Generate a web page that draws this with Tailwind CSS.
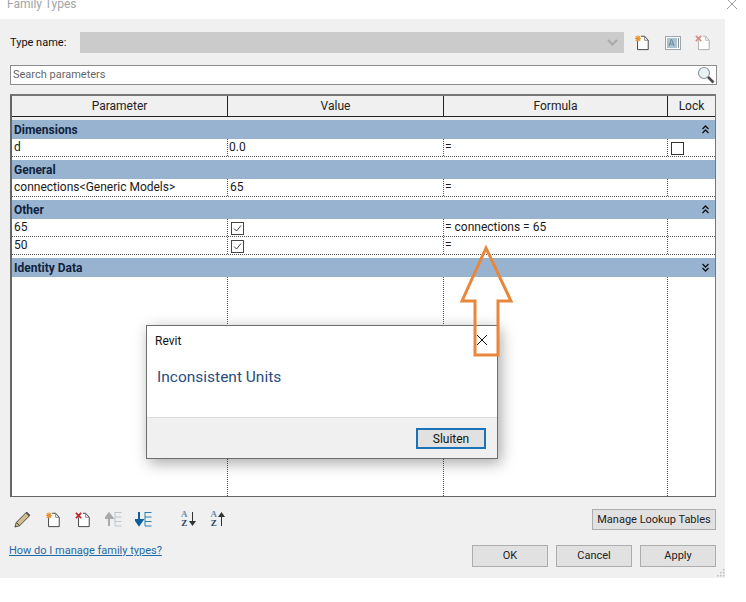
<!DOCTYPE html>
<html lang="en">
<head>
  <meta charset="UTF-8" />
  <title>Family Types</title>
  <script src="https://cdn.jsdelivr.net/npm/@tailwindcss/browser@4"></script>
</head>
<body class="relative w-[746px] h-[602px] overflow-hidden bg-white text-[12px] leading-[16px] text-[#1a1a1a] font-['Roboto','Open_Sans',sans-serif]">

  <!-- Title bar -->
  <div class="h-[19px] flex justify-between pl-[7px] pr-[8px] bg-white">
    <span class="-mt-[4px] text-[12px] text-[#a0a4a8]">Family Types</span>
    <svg class="w-[12px] h-[12px] -mt-[2px]" viewBox="0 0 12 12" stroke="#9a9a9a" fill="none"><path d="M1 1l10 10M11 1L1 11"/></svg>
  </div>

  <!-- Dialog -->
  <div class="w-[725px] h-[559px] bg-[#f0f0f0] pl-[10px] pr-[8px] flex flex-col">

    <!-- Type name -->
    <div class="flex items-center mt-[13px] h-[21px]">
      <span class="w-[70px] text-[11px] text-[#111]">Type name:</span>
      <div class="w-[544px] h-[21px] bg-[#cbcbcb] flex items-center justify-end pr-[6px]">
        <svg class="w-[11px] h-[7px]" viewBox="0 0 11 7" fill="none" stroke="#a9a9a9" stroke-width="2"><path d="M1 1l4.500 4.500L10 1"/></svg>
      </div>
      <div class="flex items-center ml-[10px] gap-[14px]">
        <svg class="w-[16px] h-[17px]" viewBox="0 0 18 18" fill="none"><path d="M4 6.500V17h12V6.500L12 2H8" fill="#fff" stroke="#333"/><path d="M12 2v4.500h4" stroke="#777"/><path d="M1 4.500h7M4.500 1v7M2 2l5 5M7 2L2 7" stroke="#e8912d" stroke-width="1.300"/></svg>
        <svg class="w-[16px] h-[14px] ml-[1px]" viewBox="0 0 16 14" fill="none"><rect x=".5" y=".5" width="15" height="13" fill="#fff" stroke="#9aa5ad"/><rect x="2" y="2" width="10" height="10" fill="#a9c3d2"/><path d="M4 10l2.500-7L9 10M5 8h3" stroke="#6f8896"/><path d="M13.500 2v10" stroke="#8a8a8a"/></svg>
        <svg class="w-[16px] h-[17px]" viewBox="0 0 18 18" fill="none"><path d="M4 6.500V17h12V6.500L12 2H9" fill="#fff" stroke="#a8a8a8"/><path d="M12 2v4.500h4" stroke="#b5b5b5"/><path d="M1 1.500l6 6M7 1.500l-6 6" stroke="#d98a8a" stroke-width="1.800"/></svg>
      </div>
    </div>

    <!-- Search -->
    <div class="mt-[12px] w-[707px] h-[20px] bg-white border border-[#8c8c8c] flex items-center justify-between pl-[2px] pr-[1px]">
      <span class="-mt-[1px] text-[11px] text-[#666]">Search parameters</span>
      <svg class="w-[18px] h-[18px]" viewBox="0 0 18 18" fill="none"><circle cx="7" cy="7" r="5.500" fill="#eaf2f5" stroke="#8f9a9f" stroke-width="1.200"/><path d="M11 11l5.500 5.500" stroke="#4c4c4c" stroke-width="2.600"/></svg>
    </div>

    <!-- Parameter table -->
    <div class="mt-[9px] w-[706px] h-[403px] border-l-2 border-t-2 border-r border-b border-l-[#666] border-t-[#777] border-r-[#777] border-b-[#666] border-b-dotted border-r-dotted bg-white flex flex-col">
      <div class="h-[21px] shrink-0 flex bg-[#f0f0f0] border-b border-[#222] text-[#222] leading-[20px]">
        <div class="w-[216px] border-r border-[#222] text-center">Parameter</div>
        <div class="w-[216px] border-r border-[#222] text-center">Value</div>
        <div class="w-[224px] border-r border-[#222] text-center">Formula</div>
        <div class="flex-1 text-center">Lock</div>
      </div>
      <div class="h-[3px] shrink-0 bg-[#f0f0f0]"></div>

      <div class="h-[19px] shrink-0 bg-[#98b3d0] flex items-center justify-between pl-[2px] pr-[6px] font-bold text-[#10233c]">
        <span>Dimensions</span>
        <svg class="w-[7px] h-[9px]" viewBox="0 0 7 9" fill="none" stroke="#111" stroke-width="1.300"><path d="M.5 4L3.500 1l3 3M.5 8l3-3 3 3"/></svg>
      </div>
      <div class="h-[18px] shrink-0 flex border-b border-dotted border-[#555]">
        <div class="w-[216px] pl-[2px] border-r border-dotted border-[#555]">d</div>
        <div class="w-[216px] pl-[1px] border-r border-dotted border-[#555]">0.0</div>
        <div class="w-[224px] pl-[1px] border-r border-dotted border-[#555]">=</div>
        <div class="flex-1 pl-[3px] pt-[3px]"><div class="w-[13px] h-[13px] border border-[#333] bg-white"></div></div>
      </div>
      <div class="h-[3px] shrink-0"></div>

      <div class="h-[19px] shrink-0 bg-[#98b3d0] flex items-center pl-[2px] font-bold text-[#10233c]">General</div>
      <div class="h-[18px] shrink-0 flex border-b border-dotted border-[#555]">
        <div class="w-[216px] pl-[2px] border-r border-dotted border-[#555]">connections&lt;Generic Models&gt;</div>
        <div class="w-[216px] pl-[2px] border-r border-dotted border-[#555]">65</div>
        <div class="w-[224px] pl-[1px] border-r border-dotted border-[#555]">=</div>
        <div class="flex-1"></div>
      </div>
      <div class="h-[3px] shrink-0"></div>

      <div class="h-[19px] shrink-0 bg-[#98b3d0] flex items-center justify-between pl-[2px] pr-[6px] font-bold text-[#10233c]">
        <span>Other</span>
        <svg class="w-[7px] h-[9px]" viewBox="0 0 7 9" fill="none" stroke="#111" stroke-width="1.300"><path d="M.5 4L3.500 1l3 3M.5 8l3-3 3 3"/></svg>
      </div>
      <div class="h-[18px] shrink-0 flex border-b border-dotted border-[#555]">
        <div class="w-[216px] pl-[2px] border-r border-dotted border-[#555]">65</div>
        <div class="w-[216px] pl-[3px] pt-[3px] border-r border-dotted border-[#555]">
          <svg class="w-[13px] h-[13px]" viewBox="0 0 13 13" fill="none"><rect x=".5" y=".5" width="12" height="12" fill="#fff" stroke="#444"/><path d="M3 6.500l2.500 2.500L10 3.500" stroke="#444"/></svg>
        </div>
        <div class="w-[224px] pl-[1px] border-r border-dotted border-[#555]">= connections = 65</div>
        <div class="flex-1"></div>
      </div>
      <div class="h-[18px] shrink-0 flex border-b border-dotted border-[#555]">
        <div class="w-[216px] pl-[2px] border-r border-dotted border-[#555]">50</div>
        <div class="w-[216px] pl-[3px] pt-[3px] border-r border-dotted border-[#555]">
          <svg class="w-[13px] h-[13px]" viewBox="0 0 13 13" fill="none"><rect x=".5" y=".5" width="12" height="12" fill="#fff" stroke="#444"/><path d="M3 6.500l2.500 2.500L10 3.500" stroke="#444"/></svg>
        </div>
        <div class="w-[224px] pl-[1px] border-r border-dotted border-[#555]">=</div>
        <div class="flex-1"></div>
      </div>
      <div class="h-[3px] shrink-0"></div>

      <div class="h-[19px] shrink-0 bg-[#98b3d0] flex items-center justify-between pl-[2px] pr-[6px] font-bold text-[#10233c]">
        <span>Identity Data</span>
        <svg class="w-[7px] h-[9px]" viewBox="0 0 7 9" fill="none" stroke="#111" stroke-width="1.300"><path d="M.5 1l3 3 3-3M.5 5l3 3 3-3"/></svg>
      </div>
      <div class="flex-1 flex">
        <div class="w-[216px] border-r border-dotted border-[#555]"></div>
        <div class="w-[216px] border-r border-dotted border-[#555]"></div>
        <div class="w-[224px] border-r border-dotted border-[#555]"></div>
      </div>
    </div>

    <!-- Bottom area -->
    <div class="flex justify-between mt-[12px] w-[706px]">
      <div class="flex flex-col">
        <div class="flex items-center h-[22px] ml-[4px] -mt-[1px]">
          <svg class="w-[17px] h-[17px]" viewBox="0 0 18 18" fill="none"><path d="M1 17l1.500-5L13 1.500l3.500 3.500L6 15.500z" fill="#d2bd8d" stroke="#444"/><path d="M2.500 12L6 15.500" stroke="#444"/><path d="M13 1.500l3.500 3.500" stroke="#555" stroke-width="2"/></svg>
          <svg class="w-[16px] h-[17px] ml-[14px]" viewBox="0 0 18 18" fill="none"><path d="M4 6.500V17h12V6.500L12 2H8" fill="#fff" stroke="#333"/><path d="M12 2v4.500h4" stroke="#777"/><path d="M1 4.500h7M4.500 1v7M2 2l5 5M7 2L2 7" stroke="#e8912d" stroke-width="1.300"/></svg>
          <svg class="w-[16px] h-[17px] ml-[14px]" viewBox="0 0 18 18" fill="none"><path d="M4 6.500V17h12V6.500L12 2H9" fill="#fff" stroke="#333"/><path d="M12 2v4.500h4" stroke="#777"/><path d="M1 1.500l6 6M7 1.500l-6 6" stroke="#c8202a" stroke-width="1.800"/></svg>
          <svg class="w-[17px] h-[16px] ml-[14px]" viewBox="0 0 17 16" fill="none"><path d="M4 15V7M.5 7L4 2.500 7.500 7z" stroke="#a9a9a9" stroke-width="2" fill="#a9a9a9"/><path d="M10 1.500h6.500M10 6h6.500M10 10.500h6.500M10 15h6.500M10 1v14" stroke="#b9c6ce"/></svg>
          <svg class="w-[17px] h-[16px] ml-[13px]" viewBox="0 0 17 16" fill="none"><path d="M4 1v8M.5 9L4 14l3.500-5z" stroke="#0f5f9c" stroke-width="2" fill="#0f5f9c"/><path d="M10 1.500h6.500M10 6h6.500M10 10.500h6.500M10 15h6.500M10 1v14" stroke="#2a80b5"/></svg>
          <div class="ml-[29px] flex items-center">
            <div class="flex flex-col items-center font-['Liberation_Serif',serif] font-bold text-[9px] leading-[9px] text-[#27405f]"><span class="text-[#6f8aa8]">A</span><span>Z</span></div>
            <svg class="w-[7px] h-[14px] ml-[1px]" viewBox="0 0 7 14"><path d="M3.500 0v9" stroke="#333"/><path d="M0 9h7l-3.500 5z" fill="#333"/></svg>
          </div>
          <div class="ml-[15px] flex items-center">
            <div class="flex flex-col items-center font-['Liberation_Serif',serif] font-bold text-[9px] leading-[9px] text-[#27405f]"><span class="text-[#6f8aa8]">A</span><span>Z</span></div>
            <svg class="w-[7px] h-[14px] ml-[1px]" viewBox="0 0 7 14"><path d="M3.500 14V5" stroke="#333"/><path d="M0 5h7L3.500 0z" fill="#333"/></svg>
          </div>
        </div>
        <a class="mt-[13px] -ml-[1px] text-[11px] underline text-[#1f6aa5]" href="#">How do I manage family types?</a>
      </div>

      <div class="flex flex-col items-end">
        <button class="w-[124px] h-[21px] whitespace-nowrap bg-[#e1e1e1] border border-[#adadad] text-[11px] text-[#222]">Manage Lookup Tables</button>
        <div class="flex gap-[8px] mt-[15px]">
          <button class="w-[76px] h-[22px] bg-[#e1e1e1] border border-[#adadad] text-[11px] text-[#222]">OK</button>
          <button class="w-[76px] h-[22px] bg-[#e1e1e1] border border-[#adadad] text-[11px] text-[#222]">Cancel</button>
          <button class="w-[76px] h-[22px] bg-[#e1e1e1] border border-[#adadad] text-[11px] text-[#222]">Apply</button>
        </div>
      </div>
    </div>
  </div>

  <!-- Resize grip -->
  <svg class="absolute left-[717px] top-[569px] w-[8px] h-[8px]" viewBox="0 0 8 8" fill="#bbb"><rect x="6" y="0" width="1.500" height="1.500"/><rect x="3" y="3" width="1.500" height="1.500"/><rect x="6" y="3" width="1.500" height="1.500"/><rect x="0" y="6" width="1.500" height="1.500"/><rect x="3" y="6" width="1.500" height="1.500"/><rect x="6" y="6" width="1.500" height="1.500"/></svg>

  <!-- Error popup -->
  <div class="absolute left-[146px] top-[325px] w-[352px] h-[134px] bg-white border border-[#6e6e6e] shadow-[3px_4px_14px_rgba(0,0,0,0.35)] flex flex-col">
    <div class="flex-1 relative">
      <div class="pl-[8px] pt-[7px] text-[#111]">Revit</div>
      <svg class="absolute right-[9px] top-[8px] w-[12px] h-[12px]" viewBox="0 0 12 12" fill="none" stroke="#111"><path d="M1 1l10 10M11 1L1 11"/></svg>
      <div class="pl-[10px] mt-[18px] text-[15.500px] leading-[20px] text-[#2a4d80]">Inconsistent Units</div>
    </div>
    <div class="h-[41px] bg-[#f0f0f0] border-t border-[#dcdcdc] flex justify-end items-start pt-[10px] pr-[11px]">
      <button class="w-[70px] h-[21px] bg-[#e1e1e1] border-2 border-[#1a72b8] text-[#111]">Sluiten</button>
    </div>
  </div>

  <!-- Hand-drawn arrow -->
  <svg class="absolute left-[455px] top-[240px] w-[64px] h-[122px]" viewBox="0 0 64 122" fill="none" stroke="#e8873c" stroke-width="3"><path d="M31 8L7 61h13v54h23V61h13z"/></svg>
</body>
</html>
